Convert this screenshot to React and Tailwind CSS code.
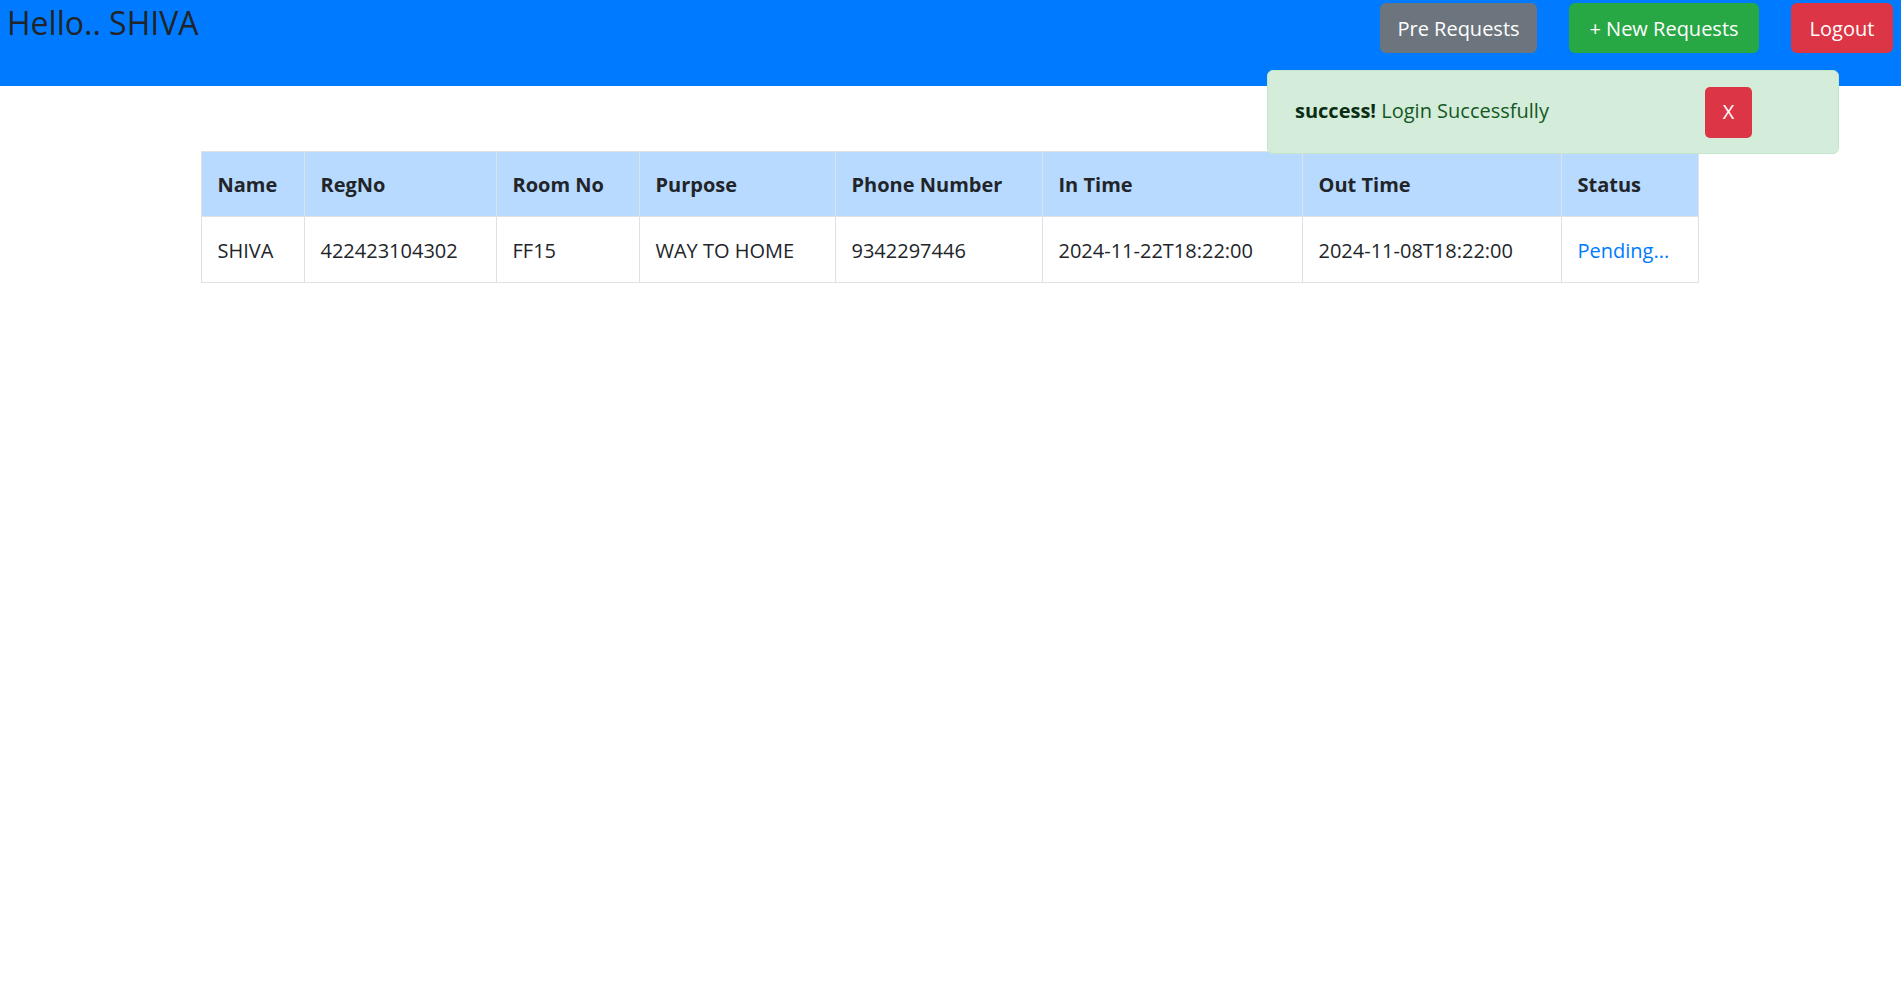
import React from "react";

const rows = [
  {
    name: "SHIVA",
    regNo: "422423104302",
    roomNo: "FF15",
    purpose: "WAY TO HOME",
    phone: "9342297446",
    inTime: "2024-11-22T18:22:00",
    outTime: "2024-11-08T18:22:00",
    status: "Pending...",
  },
];

const columns = [
  { label: "Name", w: "w-[103px]" },
  { label: "RegNo", w: "w-[192px]" },
  { label: "Room No", w: "w-[143px]" },
  { label: "Purpose", w: "w-[196px]" },
  { label: "Phone Number", w: "w-[207px]" },
  { label: "In Time", w: "w-[260px]" },
  { label: "Out Time", w: "w-[259px]" },
  { label: "Status", w: "w-[137px]" },
];

const App = () => {
  return (
    <div className="relative min-h-[997px] bg-white text-[#212529] font-['Open_Sans',sans-serif]">
      {/* Barre du haut */}
      <div className="h-[86px] bg-[#007bff] flex justify-between items-start">
        <h2 className="pl-[7px] pt-[3px] text-[32px] leading-[40px] font-normal text-[#212529]">
          Hello.. SHIVA
        </h2>
        <div className="flex gap-[32px] pt-[3px] pr-[8px]">
          <button className="w-[157px] h-[50px] pt-[2px] rounded-[6px] bg-[#6c757d] text-white text-[20px]">
            Pre Requests
          </button>
          <button className="w-[190px] h-[50px] pt-[2px] rounded-[6px] bg-[#28a745] text-white text-[20px]">
            + New Requests
          </button>
          <button className="w-[102px] h-[50px] pt-[2px] rounded-[6px] bg-[#dc3545] text-white text-[20px]">
            Logout
          </button>
        </div>
      </div>

      {/* Alerte */}
      <div className="absolute top-[70px] right-[62px] w-[572px] h-[84px] flex items-center rounded-[6px] border border-[#c3e6cb] bg-[#d4edda] pl-[27px] pr-[86px] text-[20px] text-[#155724]">
        <span className="-mt-[2px]">
          <strong className="font-bold text-[#0b2e13]">success!</strong> Login Successfully
        </span>
        <button className="ml-auto w-[47px] h-[51px] rounded-[5px] bg-[#dc3545] text-white text-[20px]">
          X
        </button>
      </div>

      {/* Tableau */}
      <div className="pt-[65px] flex justify-center">
        <table className="w-[1497px] -ml-[2px] border-collapse table-fixed text-[20px]">
          <thead>
            <tr className="bg-[#b8daff]">
              {columns.map((c) => (
                <th
                  key={c.label}
                  className={`${c.w} h-[65px] border border-[#dee2e6] px-[16px] pt-[2px] text-left font-bold`}
                >
                  {c.label}
                </th>
              ))}
            </tr>
          </thead>
          <tbody>
            {rows.map((r) => (
              <tr key={r.regNo}>
                <td className="h-[66px] border border-[#dee2e6] px-[16px] pt-[3px]">{r.name}</td>
                <td className="border border-[#dee2e6] px-[16px] pt-[3px]">{r.regNo}</td>
                <td className="border border-[#dee2e6] px-[16px] pt-[3px]">{r.roomNo}</td>
                <td className="border border-[#dee2e6] px-[16px] pt-[3px]">{r.purpose}</td>
                <td className="border border-[#dee2e6] px-[16px] pt-[3px]">{r.phone}</td>
                <td className="border border-[#dee2e6] px-[16px] pt-[3px]">{r.inTime}</td>
                <td className="border border-[#dee2e6] px-[16px] pt-[3px]">{r.outTime}</td>
                <td className="border border-[#dee2e6] px-[16px] pt-[3px] text-[#007bff]">{r.status}</td>
              </tr>
            ))}
          </tbody>
        </table>
      </div>
    </div>
  );
};

export default App;
